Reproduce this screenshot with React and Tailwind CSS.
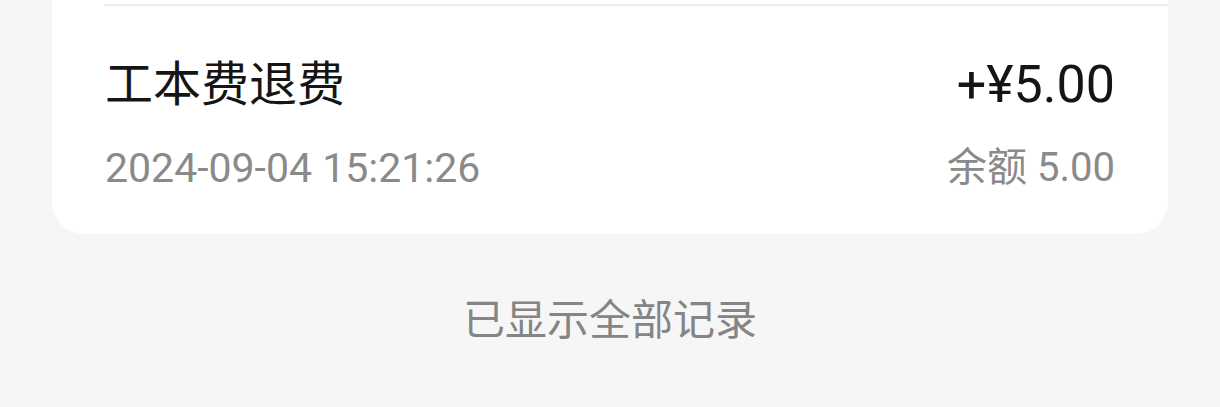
export default function App() {
  const cjk = { fontFamily: 'Roboto, "Noto Sans CJK SC", sans-serif' };

  return (
    <div className="w-[1220px] h-[407px] overflow-hidden bg-[#f6f6f6]" style={cjk}>
      <div className="mx-[52px] bg-white rounded-b-[32px] pt-[4px] pb-[42px]">
        <div className="ml-[52px] h-[2px] bg-[#eeeeee]"></div>
        <div className="px-[53px] pt-[51px]">
          <div className="flex items-center justify-between h-[56px]">
            <span className="text-[48px] leading-[56px] text-[#151515]">工本费退费</span>
            <span className="text-[52px] leading-[56px] text-[#151515]">+¥5.00</span>
          </div>
          <div className="flex items-center justify-between h-[48px] mt-[31px]">
            <span className="text-[41px] leading-[48px] text-[#8a8a8a]">2024-09-04 15:21:26</span>
            <span className="text-[40px] leading-[48px] text-[#8a8a8a]">余额 5.00</span>
          </div>
        </div>
      </div>
      <div className="mt-[63px] text-center text-[42px] leading-[48px] text-[#858585]">
        已显示全部记录
      </div>
    </div>
  );
}
